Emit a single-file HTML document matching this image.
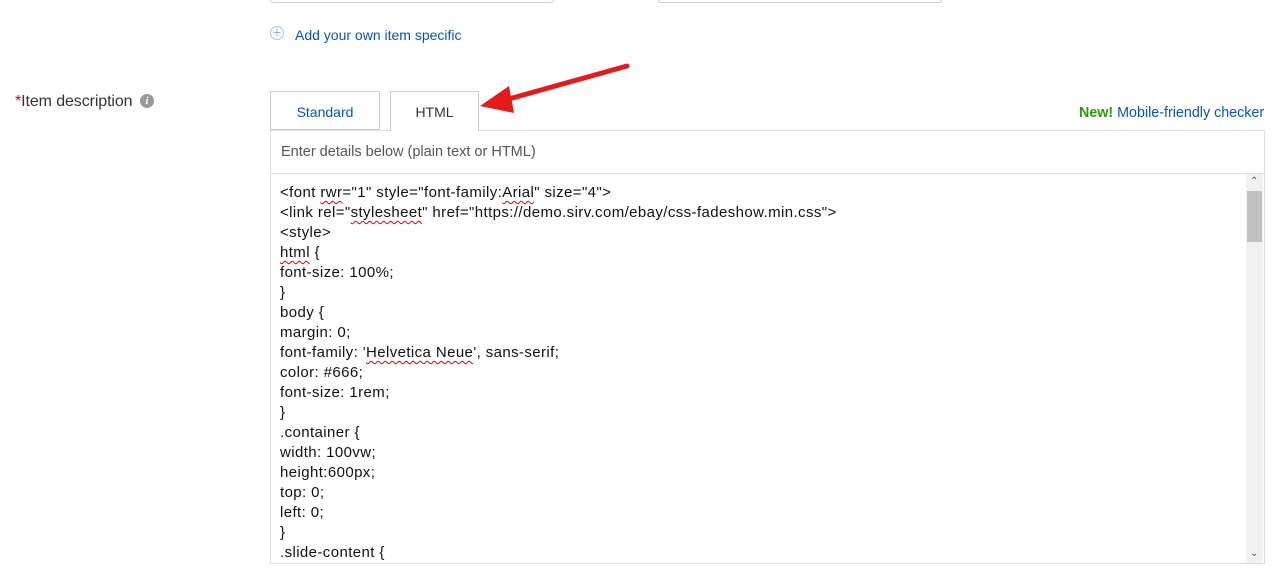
<!DOCTYPE html>
<html><head><meta charset="utf-8"><style>
body{margin:0;width:1279px;height:568px;background:#fff;font-family:"Liberation Sans",Arial,sans-serif;position:relative;overflow:hidden}
.a{position:absolute}
.inp{border:1px solid #ccc;border-top:none;height:2px;border-radius:0 0 3px 3px;top:0}
.tab{position:absolute;top:91px;height:39px;border:1px solid #ccc;border-bottom:none;background:#fff;font-size:14px;text-align:center;line-height:40px;box-sizing:border-box}
.code{position:absolute;left:280px;top:183px;font-size:15px;letter-spacing:0.4px;line-height:20px;color:#111;white-space:pre}
.sq{text-decoration:underline wavy #d00;text-decoration-thickness:1px;text-underline-offset:3px}
</style></head><body>
<div class="a inp" style="left:270px;width:282px"></div>
<div class="a inp" style="left:658px;width:282px"></div>
<div class="a" style="left:270px;top:26px;width:14px;height:14px;border:1px solid #a9c3ea;border-radius:50%;box-sizing:border-box;color:#8fb0e3;font-size:14px;line-height:11px;text-align:center">+</div>
<div class="a" style="left:295px;top:27px;font-size:14px;color:#0654ba">Add your own item specific</div>
<div class="a" style="left:15px;top:93px;font-size:16px;letter-spacing:-0.1px;color:#333"><span style="color:#d00">*</span>Item description</div>
<div class="a" style="left:140px;top:94px;width:14px;height:14px;border-radius:50%;background:#999;color:#fff;font-size:11px;font-style:italic;font-weight:bold;text-align:center;line-height:14px;font-family:'Liberation Serif',serif">i</div>
<div class="tab" style="left:270px;width:110px;color:#0654ba;border-bottom:1px solid #ccc">Standard</div>
<div class="a" style="left:270px;top:130px;width:995px;height:434px;border:1px solid #ddd;box-sizing:border-box"></div>
<div class="tab" style="left:390px;width:89px;color:#333;height:40px;z-index:2">HTML</div>
<div class="a" style="left:1079px;top:105px;font-size:14.3px;color:#0654ba"><b style="color:#2b9a0b">New!</b> Mobile-friendly checker</div>
<div class="a" style="left:281px;top:144px;font-size:14.5px;color:#555">Enter details below (plain text or HTML)</div>
<div class="a" style="left:271px;top:173px;width:993px;height:1px;background:#ddd"></div>
<div class="a" style="left:1246px;top:174px;width:17px;height:389px;background:#f1f1f1"></div>
<div class="a" style="left:1247px;top:191px;width:15px;height:51px;background:#c1c1c1"></div>
<div class="a" style="left:1250px;top:176px;font-size:10px;color:#555">&#8963;</div>
<div class="a" style="left:1250px;top:548px;font-size:10px;color:#555">&#8964;</div>
<div class="code">&lt;font <span class="sq">rwr</span>="1" style="font-family:<span class="sq">Arial</span>" size="4"&gt;
&lt;link rel="<span class="sq">stylesheet</span>" href="https://demo.sirv.com/ebay/css-fadeshow.min.css"&gt;
&lt;style&gt;
<span class="sq">html</span> {
font-size: 100%;
}
body {
margin: 0;
font-family: '<span class="sq">Helvetica Neue</span>', sans-serif;
color: #666;
font-size: 1rem;
}
.container {
width: 100vw;
height:600px;
top: 0;
left: 0;
}
.slide-content {</div>
<svg class="a" style="left:0;top:0" width="1279" height="568">
<line x1="627" y1="66" x2="505" y2="100" stroke="#e41b1b" stroke-width="5" stroke-linecap="round"/>
<polygon points="480,106 509,86 514,113" fill="#e41b1b"/>
</svg>
</body></html>
